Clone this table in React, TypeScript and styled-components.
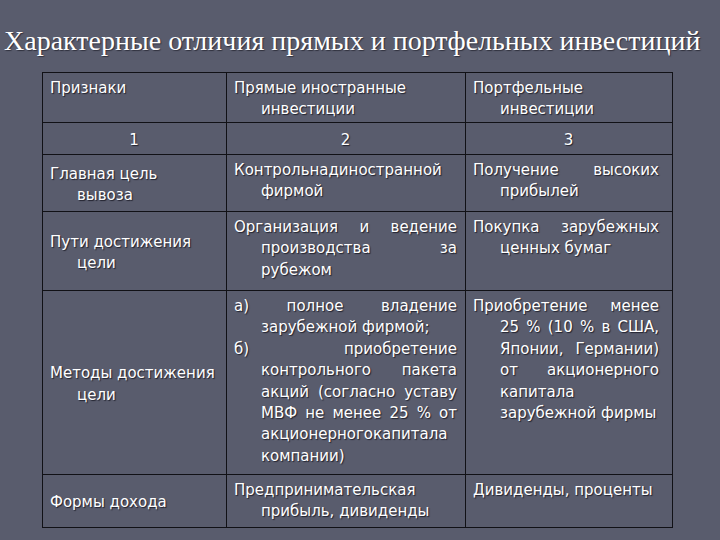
import React from "react";
import styled, { createGlobalStyle } from "styled-components";

const Global = createGlobalStyle`
  html, body { margin: 0; padding: 0; background: #595c6d; }
  body { width: 720px; height: 540px; overflow: hidden; }
`;

const Page = styled.div`
  width: 720px;
  height: 540px;
  background: #595c6d;
  box-sizing: border-box;
  padding-top: 22px;
`;

const Title = styled.h1`
  margin: 0 0 0 4px;
  height: 50px;
  font-family: "Liberation Serif", "Times New Roman", serif;
  font-weight: normal;
  font-size: 28px;
  line-height: 38px;
  color: #ffffff;
  white-space: nowrap;
  text-shadow: 1px 1px 1px rgba(20, 20, 30, 0.6);
`;

const Table = styled.table`
  margin-left: 42px;
  border-collapse: collapse;
  table-layout: fixed;
  width: 630px;
  font-family: "DejaVu Sans", Tahoma, sans-serif;
  font-size: 15px;
  line-height: 21.4px;
  color: #ffffff;
  text-shadow: 1px 1px 1px rgba(10, 10, 20, 0.7);
`;

const Row = styled.tr<{ $h: number }>`
  height: ${(p) => p.$h}px;
`;

const Cell = styled.td<{ $valign?: "top" | "middle"; $center?: boolean; $pr?: number }>`
  border: 1.5px solid #111116;
  padding: 5px ${(p) => p.$pr ?? 8}px 1px 7px;
  vertical-align: ${(p) => p.$valign ?? "top"};
  text-align: ${(p) => (p.$center ? "center" : "left")};
  box-sizing: border-box;
`;

const Para = styled.p<{ $justify?: boolean }>`
  margin: 0;
  padding-left: 27px;
  text-indent: -27px;
  text-align: ${(p) => (p.$justify ? "justify" : "left")};
`;

const Col = styled.col<{ $w: number }>`
  width: ${(p) => p.$w}px;
`;

export default function App() {
  return (
    <>
      <Global />
      <Page>
        <Title>Характерные отличия прямых и портфельных инвестиций</Title>
        <Table>
          <colgroup>
            <Col $w={184} />
            <Col $w={239} />
            <Col $w={207} />
          </colgroup>
          <tbody>
            <Row $h={50}>
              <Cell><Para>Признаки</Para></Cell>
              <Cell><Para>Прямые иностранные инвестиции</Para></Cell>
              <Cell $pr={13}><Para>Портфельные инвестиции</Para></Cell>
            </Row>
            <Row $h={32}>
              <Cell $valign="middle" $center>1</Cell>
              <Cell $valign="middle" $center>2</Cell>
              <Cell $valign="middle" $center>3</Cell>
            </Row>
            <Row $h={57}>
              <Cell $valign="middle"><Para>Главная цель<br />вывоза</Para></Cell>
              <Cell><Para>Контрольнадиностранной фирмой</Para></Cell>
              <Cell $pr={13}><Para $justify>Получение высоких прибылей</Para></Cell>
            </Row>
            <Row $h={79}>
              <Cell $valign="middle"><Para>Пути достижения цели</Para></Cell>
              <Cell><Para $justify>Организация и ведение производства за рубежом</Para></Cell>
              <Cell $pr={13}><Para $justify>Покупка зарубежных ценных бумаг</Para></Cell>
            </Row>
            <Row $h={184}>
              <Cell $valign="middle"><Para>Методы достижения цели</Para></Cell>
              <Cell>
                <Para $justify>а) полное владение зарубежной фирмой;</Para>
                <Para $justify>б) приобретение контрольного пакета акций (согласно уставу МВФ не менее 25 % от акционерногокапитала компании)</Para>
              </Cell>
              <Cell $pr={13}><Para $justify>Приобретение менее 25 % (10 % в США, Японии, Германии) от акционерного капитала зарубежной фирмы</Para></Cell>
            </Row>
            <Row $h={53}>
              <Cell $valign="middle"><Para>Формы дохода</Para></Cell>
              <Cell><Para>Предпринимательская прибыль, дивиденды</Para></Cell>
              <Cell $pr={13}><Para>Дивиденды, проценты</Para></Cell>
            </Row>
          </tbody>
        </Table>
      </Page>
    </>
  );
}
